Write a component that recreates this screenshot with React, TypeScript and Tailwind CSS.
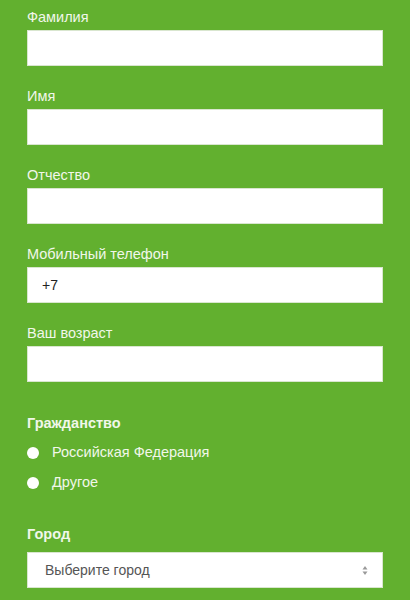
const fields = [
  { label: "Фамилия", value: "" },
  { label: "Имя", value: "" },
  { label: "Отчество", value: "" },
  { label: "Мобильный телефон", value: "+7" },
  { label: "Ваш возраст", value: "" },
];

function TextField({ label, value }: { label: string; value: string }) {
  return (
    <div className="mb-5">
      <label className="block text-[14.5px] leading-5 text-[#f1f7ea] mb-[3px]">{label}</label>
      <input
        type="text"
        defaultValue={value}
        className="block w-full h-9 bg-white border border-[#d9e6cf] px-[14px] text-[14px] text-[#222] outline-none"
      />
    </div>
  );
}

function Radio({ label }: { label: string }) {
  return (
    <label className="flex items-center h-5 text-[14.5px] text-[#f1f7ea]">
      <span className="w-3 h-3 rounded-full bg-white mr-[13px]" />
      {label}
    </label>
  );
}

export default function App() {
  return (
    <div className="flex flex-col w-[410px] h-[600px] bg-[#62b02f] px-[27px] pt-[7px] font-['Liberation_Sans',Arial,sans-serif] overflow-hidden">
      {fields.map((f) => (
        <TextField key={f.label} label={f.label} value={f.value} />
      ))}
      <div className="mt-[11px]">
        <div className="text-[14.5px] leading-5 font-bold text-[#f1f7ea]">Гражданство</div>
        <div className="mt-[10px] flex flex-col gap-[10px]">
          <Radio label="Российская Федерация" />
          <Radio label="Другое" />
        </div>
      </div>
      <div className="mt-[31px]">
        <div className="text-[14.5px] leading-5 font-bold text-[#f1f7ea] mb-[8px]">Город</div>
        <div className="flex items-center justify-between h-9 bg-white border border-[#d9e6cf] pl-[17px] pr-[14px]">
          <span className="text-[14px] text-[#555]">Выберите город</span>
          <svg width="6" height="11" viewBox="0 0 6 11" className="text-[#999]">
            <path d="M3 1 L5.5 4.5 H0.5 Z" fill="currentColor" />
            <path d="M3 10 L5.5 6.5 H0.5 Z" fill="currentColor" />
          </svg>
        </div>
      </div>
    </div>
  );
}
